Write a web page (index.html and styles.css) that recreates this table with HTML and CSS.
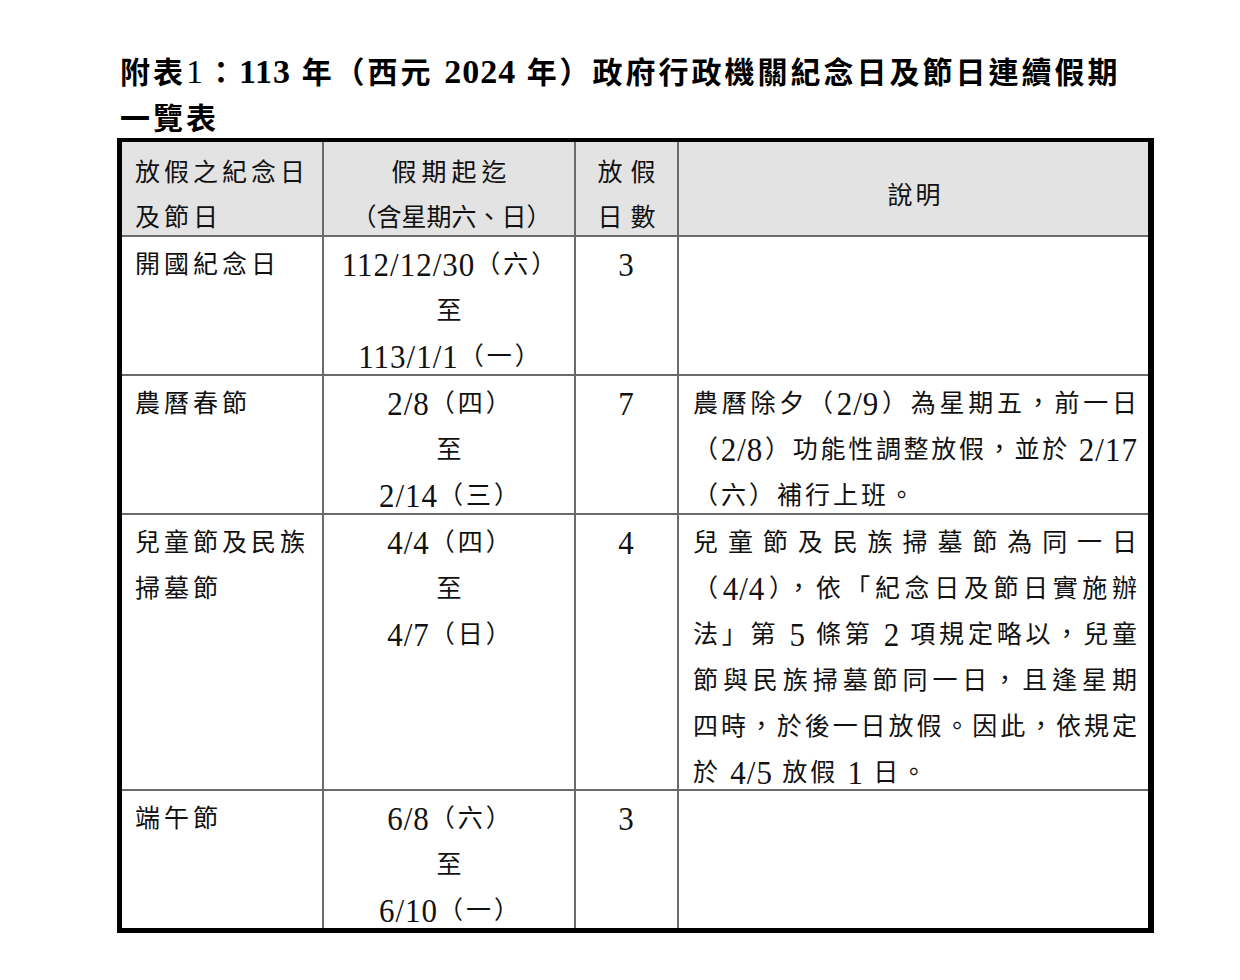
FILE: index.html
```html
<!DOCTYPE html>
<html lang="zh-Hant">
<head>
<meta charset="utf-8">
<title>113年政府行政機關紀念日及節日連續假期一覽表</title>
<link rel="stylesheet" href="styles.css">
</head>
<body>
<div class="page">
  <h1 class="title">附表<span class="t1">1</span>：<span class="tn">113</span> 年（西元 <span class="tn">2024</span> 年）政府行政機關紀念日及節日連續假期<br>一覽表</h1>
  <div class="grid">
    <div class="c h c1"><span class="ln">放假之紀念日</span><span class="ln">及節日</span></div>
    <div class="c h c2"><span class="ln">假期起迄</span><span class="ln tight">（含星期六、日）</span></div>
    <div class="c h c3"><span class="ln">放假</span><span class="ln">日數</span></div>
    <div class="c h c4 mid">說明</div>

    <div class="c c1"><span class="ln">開國紀念日</span></div>
    <div class="c c2"><span class="ln"><span class="n">112/12/30</span>（六）</span><span class="ln">至</span><span class="ln"><span class="n">113/1/1</span>（一）</span></div>
    <div class="c c3"><span class="ln"><span class="n">3</span></span></div>
    <div class="c c4"></div>

    <div class="c c1"><span class="ln">農曆春節</span></div>
    <div class="c c2"><span class="ln"><span class="n">2/8</span>（四）</span><span class="ln">至</span><span class="ln"><span class="n">2/14</span>（三）</span></div>
    <div class="c c3"><span class="ln"><span class="n">7</span></span></div>
    <div class="c c4">
      <span class="ln">農曆除夕（<span class="n">2/9</span>）為星期五，前一日</span>
      <span class="ln">（<span class="n">2/8</span>）功能性調整放假，並於 <span class="n">2/17</span></span>
      <span class="ln end">（六）補行上班。</span>
    </div>

    <div class="c c1"><span class="ln">兒童節及民族</span><span class="ln">掃墓節</span></div>
    <div class="c c2"><span class="ln"><span class="n">4/4</span>（四）</span><span class="ln">至</span><span class="ln"><span class="n">4/7</span>（日）</span></div>
    <div class="c c3"><span class="ln"><span class="n">4</span></span></div>
    <div class="c c4">
      <span class="ln">兒童節及民族掃墓節為同一日</span>
      <span class="ln">（<span class="n">4/4</span>），依「紀念日及節日實施辦</span>
      <span class="ln">法」第 <span class="n">5</span> 條第 <span class="n">2</span> 項規定略以，兒童</span>
      <span class="ln">節與民族掃墓節同一日，且逢星期</span>
      <span class="ln">四時，於後一日放假。因此，依規定</span>
      <span class="ln end">於 <span class="n">4/5</span> 放假 <span class="n">1</span> 日。</span>
    </div>

    <div class="c c1"><span class="ln">端午節</span></div>
    <div class="c c2"><span class="ln"><span class="n">6/8</span>（六）</span><span class="ln">至</span><span class="ln"><span class="n">6/10</span>（一）</span></div>
    <div class="c c3"><span class="ln"><span class="n">3</span></span></div>
    <div class="c c4"></div>
  </div>
</div>
</body>
</html>
```
FILE: styles.css
```css
html, body {
  margin: 0;
  padding: 0;
  background: #ffffff;
}

body {
  color: #111111;
  font-family: "Liberation Serif", "Noto Sans CJK TC", serif;
}

.page {
  padding: 50px 0 0 117px;
}

.title {
  margin: 0 0 -4px 3px;
  font-size: 30px;
  line-height: 46px;
  font-weight: 700;
  letter-spacing: 3px;
  color: #000000;
  white-space: nowrap;
}

.title .t1 {
  font-family: "Liberation Serif", serif;
  font-size: 34px;
  font-weight: 400;
  line-height: 0;
}

.title .tn {
  font-family: "Liberation Serif", serif;
  font-size: 34px;
  line-height: 0;
  letter-spacing: 1px;
}

.grid {
  display: grid;
  grid-template-columns: 200px 250px 101px 469px;
  grid-template-rows: 93px 137px 137px 274px 137px;
  gap: 2px;
  width: max-content;
  background: #6b6b6b;
  border: 5px solid #000000;
  border-top-width: 4px;
  border-right-width: 6px;
}

.c {
  background: #ffffff;
  font-size: 25px;
  line-height: 46px;
  padding: 5px 10px 0 13px;
  letter-spacing: 4px;
  overflow: visible;
}

.c .ln {
  display: block;
  white-space: nowrap;
}

.h {
  background: #e3e3e3;
  padding-top: 8px;
  line-height: 45px;
}

.c2 {
  text-align: center;
  padding: 5px 0 0 3px;
  letter-spacing: 3px;
}

.h.c2 {
  padding: 8px 0 0 5px;
  letter-spacing: 5px;
}

.h.c2 .tight {
  letter-spacing: 0;
}

.c3 {
  text-align: center;
  padding: 5px 0 0 0;
  letter-spacing: 0;
}

.h.c3 {
  padding: 8px 0 0 8px;
  letter-spacing: 8px;
}

.c4 {
  padding: 5px 10px 0 14px;
  letter-spacing: 1px;
}

.c4 .ln {
  white-space: normal;
  text-align: justify;
  text-align-last: justify;
}

.c4 .ln.end {
  text-align: left;
  text-align-last: left;
  letter-spacing: 3px;
}

.mid {
  display: flex;
  align-items: center;
  justify-content: center;
  padding: 14px 0 0 4px;
  letter-spacing: 3px;
}

.n {
  display: inline-block;
  font-family: "Liberation Serif", "Times New Roman", serif;
  font-size: 31px;
  line-height: 0;
  letter-spacing: 1px;
  vertical-align: -2px;
  transform: scaleY(1.12);
  transform-origin: 50% 60%;
}
```
